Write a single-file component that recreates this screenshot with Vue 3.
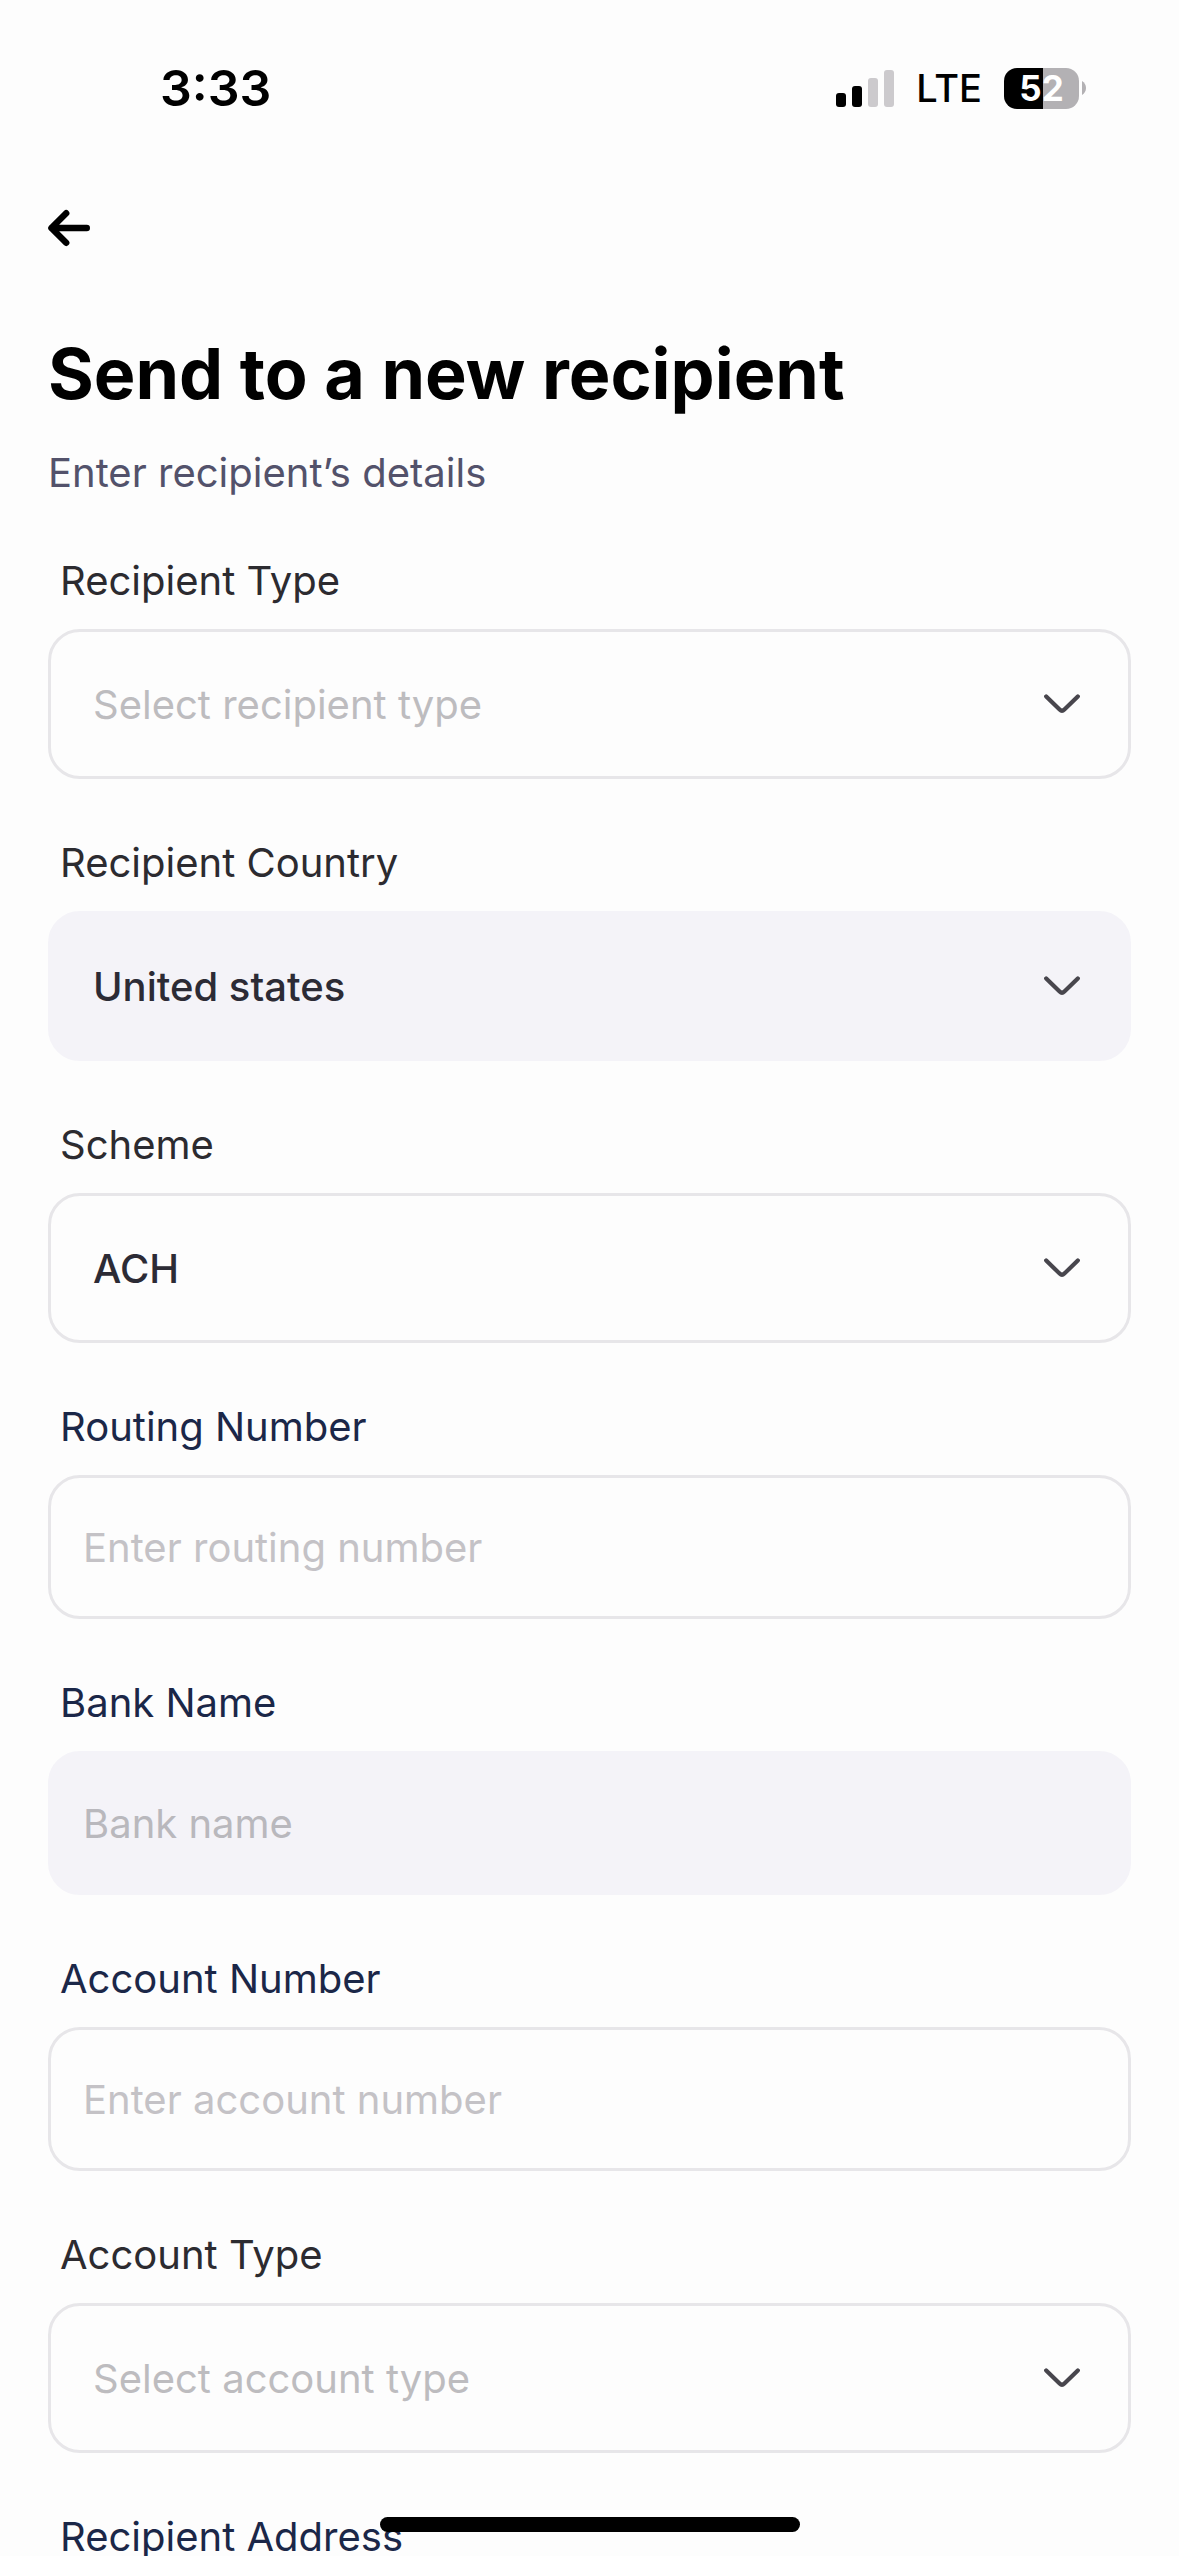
<template>
  <div class="screen">
    <div class="status-bar">
      <span class="status-time">3:33</span>
      <div class="status-right">
        <svg class="signal" viewBox="0 0 58 37" aria-hidden="true">
          <rect x="0" y="23" width="10" height="14" rx="3" fill="#000" />
          <rect x="16" y="16" width="10" height="21" rx="3" fill="#000" />
          <rect x="32" y="8" width="10" height="29" rx="3" fill="#cccacd" />
          <rect x="48" y="0" width="10" height="37" rx="3" fill="#cccacd" />
        </svg>
        <span class="network">LTE</span>
        <div class="battery">
          <span class="battery-body" :style="batteryStyle">{{ battery }}</span>
          <svg class="battery-cap" viewBox="0 0 4 14" aria-hidden="true">
            <path d="M0 0C2.5 1.5 4 4 4 7S2.5 12.5 0 14Z" fill="#b3b1b4" />
          </svg>
        </div>
      </div>
    </div>

    <main class="content">
      <button class="back" type="button" aria-label="Back">
        <svg viewBox="0 0 42 36" aria-hidden="true">
          <path d="M38.8 18H3.6M18.2 3.2L3.4 18L18.2 32.8" />
        </svg>
      </button>

      <h1 class="title">Send to a new recipient</h1>
      <p class="subtitle">Enter recipient’s details</p>

      <form class="form" @submit.prevent>
        <div v-for="field in fields" :key="field.id" class="field">
          <label :for="field.id" class="label" :class="{ navy: field.type === 'input' }">
            {{ field.label }}
          </label>

          <div v-if="field.type === 'select'" class="select-wrap">
            <select
              :id="field.id"
              v-model="field.value"
              class="control select"
              :class="{ empty: !field.value }"
              :disabled="field.disabled"
            >
              <option v-if="field.placeholder" value="" disabled>{{ field.placeholder }}</option>
              <option v-for="option in field.options" :key="option" :value="option">
                {{ option }}
              </option>
            </select>
            <svg class="chevron" viewBox="0 0 36 20" aria-hidden="true">
              <path d="M2.2 2.4L15.6 15.6Q18 17.9 20.4 15.6L33.8 2.4" />
            </svg>
          </div>

          <input
            v-else
            :id="field.id"
            v-model="field.value"
            class="control input"
            type="text"
            :placeholder="field.placeholder"
            :disabled="field.disabled"
          />
        </div>
      </form>
    </main>

    <div class="home-indicator"></div>
  </div>
</template>

<script setup>
import { computed, reactive, ref } from 'vue'

const battery = ref(52)

const batteryStyle = computed(() => ({
  background: `linear-gradient(to right, #000 ${battery.value}%, #b3b1b4 ${battery.value}%)`
}))

const fields = reactive([
  {
    id: 'recipient-type',
    type: 'select',
    label: 'Recipient Type',
    placeholder: 'Select recipient type',
    options: [],
    value: ''
  },
  {
    id: 'recipient-country',
    type: 'select',
    label: 'Recipient Country',
    options: ['United states'],
    value: 'United states',
    disabled: true
  },
  {
    id: 'scheme',
    type: 'select',
    label: 'Scheme',
    options: ['ACH'],
    value: 'ACH'
  },
  {
    id: 'routing-number',
    type: 'input',
    label: 'Routing Number',
    placeholder: 'Enter routing number',
    value: ''
  },
  {
    id: 'bank-name',
    type: 'input',
    label: 'Bank Name',
    placeholder: 'Bank name',
    value: '',
    disabled: true
  },
  {
    id: 'account-number',
    type: 'input',
    label: 'Account Number',
    placeholder: 'Enter account number',
    value: ''
  },
  {
    id: 'account-type',
    type: 'select',
    label: 'Account Type',
    placeholder: 'Select account type',
    options: [],
    value: ''
  },
  {
    id: 'recipient-address',
    type: 'input',
    label: 'Recipient Address',
    value: ''
  }
])
</script>

<style>
body {
  margin: 0;
  background: #fdfdfd;
}
</style>

<style scoped>
.screen {
  height: 100vh;
  display: flex;
  flex-direction: column;
  overflow: hidden;
  background: #fdfdfd;
  font-family: Inter, "Liberation Sans", sans-serif;
  color: #000;
}

.status-bar {
  flex: none;
  display: flex;
  justify-content: space-between;
  align-items: center;
  height: 176px;
  padding: 0 93px 0 160px;
  box-sizing: border-box;
}

.status-time {
  font-size: 50px;
  line-height: 64px;
  font-weight: 600;
}

.status-right {
  display: flex;
  align-items: center;
  gap: 22px;
}

.signal {
  width: 58px;
  height: 37px;
}

.network {
  font-size: 38px;
  line-height: 48px;
  font-weight: 500;
}

.battery {
  display: flex;
  align-items: center;
  gap: 3px;
}

.battery-body {
  width: 75px;
  height: 41px;
  border-radius: 13px;
  color: #fff;
  font-size: 35px;
  line-height: 41px;
  font-weight: 700;
  text-align: center;
}

.battery-cap {
  width: 4px;
  height: 14px;
}

.content {
  flex: 1;
  min-height: 0;
  padding: 32px 48px 0;
  overflow-y: auto;
  scrollbar-width: none;
}

.back {
  display: block;
  padding: 0;
  border: 0;
  background: none;
  cursor: pointer;
}

.back svg {
  display: block;
  width: 42px;
  height: 40px;
}

.back path {
  fill: none;
  stroke: #000;
  stroke-width: 6.4;
  stroke-linecap: round;
  stroke-linejoin: round;
}

.title {
  margin: 84px 0 0;
  font-size: 70px;
  line-height: 84px;
  font-weight: 700;
}

.subtitle {
  margin: 33px 0 0;
  font-size: 40px;
  line-height: 48px;
  color: #53526b;
}

.form {
  display: flex;
  flex-direction: column;
  gap: 60px;
  margin-top: 60px;
}

.field {
  display: flex;
  flex-direction: column;
  gap: 24px;
}

.label {
  padding-left: 12px;
  font-size: 40px;
  line-height: 48px;
  color: #2c2b30;
}

.label.navy {
  color: #1b2748;
}

.control {
  width: 100%;
  box-sizing: border-box;
  margin: 0;
  border: 3px solid #e7e6e9;
  border-radius: 32px;
  background: #fdfdfd;
  font-family: inherit;
  font-size: 40px;
  color: #2c2b35;
  outline: none;
  opacity: 1;
}

.control:disabled {
  border-color: #f4f3f8;
  background: #f4f3f8;
}

.input {
  height: 144px;
  padding: 0 32px;
}

.input::placeholder {
  color: #c4c2c6;
  opacity: 1;
}

.input:disabled::placeholder {
  color: #b9b8bd;
}

.select-wrap {
  position: relative;
}

.select {
  display: block;
  height: 150px;
  padding: 0 120px 0 42px;
  appearance: none;
  font-weight: 500;
}

.select.empty {
  font-weight: 400;
  color: #bdbcbf;
}

/* sits on top of the native select */
.chevron {
  position: absolute;
  top: 50%;
  right: 51px;
  width: 36px;
  height: 20px;
  transform: translateY(-50%);
  pointer-events: none;
}

.chevron path {
  fill: none;
  stroke: #48464d;
  stroke-width: 4.2;
  stroke-linecap: round;
}

.home-indicator {
  position: fixed;
  bottom: 24px;
  left: 50%;
  width: 420px;
  height: 15px;
  border-radius: 8px;
  background: #000;
  transform: translateX(-50%);
}
</style>
